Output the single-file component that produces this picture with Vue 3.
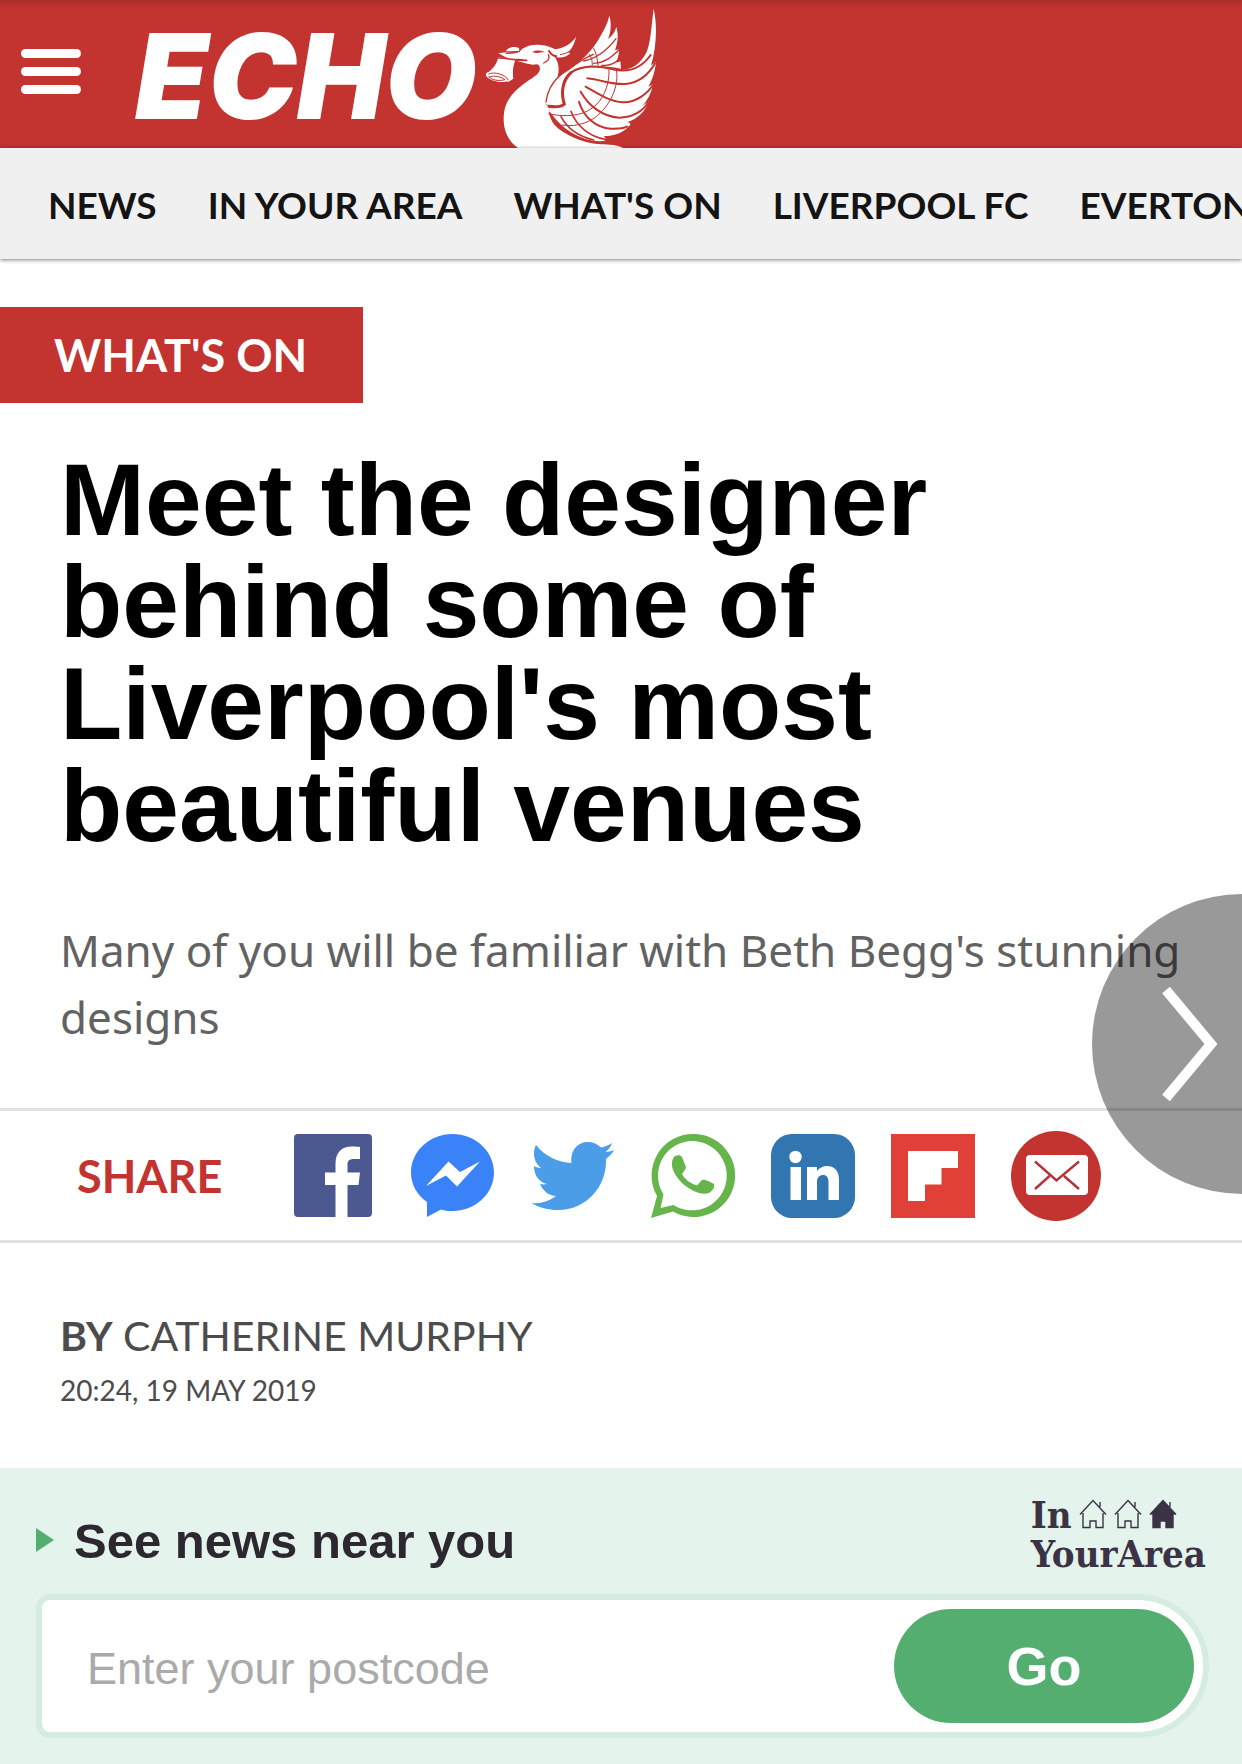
<template>
    <div class="page">
        <header class="header">
            <button class="menu-btn" type="button" aria-label="Menu">
                <span class="menu-bar"></span>
                <span class="menu-bar"></span>
                <span class="menu-bar"></span>
            </button>
            <a class="logo" href="#">
                <span class="logo-text">ECHO</span>
                <svg class="logo-bird" viewBox="48 0 516 444" aria-hidden="true">
                    <!-- neck and body -->
                    <path fill="#fff" d="M147 444C112 420 100 380 105 340C109 302 132 278 160 255C188 233 210 226 213 207C213 199 209 193 202 193C190 196 178 192 170 190L142 182L172 180C160 176 140 176 120 177L88 160C112 156 135 160 152 155C162 140 190 131 215 135C234 136 246 142 258 148C284 145 306 132 321 111C317 130 309 147 296 157L304 160C292 172 272 176 257 170C270 188 272 210 265 232C257 258 236 280 231 312L243 326C238 340 243 356 256 374C285 404 335 427 395 433C420 433 448 436 462 444Z" />
                    <path fill="#fff" d="M110 154C118 142 134 138 150 144L151 153Z" />
                    <!-- bell in the beak -->
                    <path fill="#fff" d="M88 172L140 178C132 196 130 216 133 236L118 246L60 215C74 205 84 190 88 172Z" />
                    <ellipse cx="86" cy="230" rx="36" ry="15" transform="rotate(11 86 230)" fill="#fff" />
                    <g fill="none" stroke="#c3332f" stroke-linecap="round">
                        <path stroke-width="3" d="M59 222C75 214 108 222 118 240M60 231C75 224 100 232 108 239C90 244 70 241 60 231" />
                        <path stroke-width="5" d="M88 174C118 173 140 184 173 181" />
                        <path stroke-width="4" d="M151 154C140 158 126 160 112 160M238 164C244 176 236 184 224 189" />
                        <path stroke-width="6" d="M240 153C246 163 254 168 262 169" />
                        <path stroke-width="3" d="M274 164C285 162 293 159 298 156" />
                    </g>
                    <path fill="#c3332f" d="M190 156C202 150 218 150 230 158C216 154 210 164 190 156Z" />
                    <!-- far wing -->
                    <path fill="#fff" d="M231 310C232 270 252 236 296 210C336 187 372 148 390 116C404 92 416 70 421 47C428 68 426 96 417 117C430 108 438 96 442 81C450 108 445 132 438 151L450 148C451 162 446 172 443 188L454 184L456 206C400 196 340 192 304 216C280 235 272 262 284 300L290 318L243 324Z" />
                    <!-- near wing -->
                    <path fill="#fff" d="M243 324L290 317C274 284 280 242 312 216C344 200 390 198 440 208C478 216 512 196 532 158C546 126 547 76 554 26C565 72 563 142 546 196L561 186C558 215 550 240 538 260L552 252C547 280 536 300 520 318L539 304C530 334 505 358 475 366C490 370 484 376 475 383C455 402 430 408 405 408L414 422C350 434 280 394 241 338Z" />
                    <g fill="none" stroke="#c3332f" stroke-linecap="round">
                        <path stroke-width="9" d="M240 319C260 322 276 322 286 312C276 282 278 244 306 218" />
                        <path stroke-width="6" d="M306 218C336 194 390 196 428 207C478 220 516 206 545 165" />
                        <path stroke-width="4" d="M231 306C236 270 256 232 300 208C324 188 352 172 373 163" />
                        <path stroke-width="4" d="M344 183C385 176 415 150 441 116M374 190C410 188 432 168 452 148M398 196C420 198 440 190 452 174" />
                        <path stroke-width="3" d="M374 145C382 160 385 176 387 196M361 163C368 172 370 184 370 194" />
                        <path stroke-width="6" d="M355 235C400 240 425 254 470 252C510 248 540 222 558 190" />
                        <path stroke-width="6" d="M350 260C385 280 420 304 462 307C502 308 536 280 551 256" />
                        <path stroke-width="6" d="M335 275C360 318 400 350 450 353C492 353 522 332 537 308" />
                        <path stroke-width="6" d="M330 305C344 352 382 384 425 386C448 387 466 384 474 380" />
                        <path stroke-width="5" d="M306 334C322 378 360 410 412 419" />
                        <path stroke-width="5" d="M276 350C296 388 332 410 374 420" />
                        <path stroke-width="7" d="M242 340C276 388 330 426 394 428C404 428 410 425 414 422" />
                        <path stroke-width="3" d="M420 210C422 258 400 304 370 324C334 350 290 350 246 343M443 214C450 270 414 330 370 358C340 374 312 380 280 375" />
                    </g>
                </svg>
            </a>
        </header>

        <nav class="nav">
            <a v-for="item in navItems" :key="item" class="nav-link" href="#">{{ item }}</a>
        </nav>

        <main class="article">
            <a class="tag" href="#">WHAT'S ON</a>
            <h1 class="title">Meet the designer behind some of Liverpool's most beautiful venues</h1>
            <p class="lead">Many of you will be familiar with Beth Begg's stunning designs</p>

            <section class="share">
                <span class="share-label">SHARE</span>
                <div class="share-list">
                    <a class="share-item" href="#" aria-label="Facebook">
                        <svg viewBox="0 0 84 84">
                            <rect x="3" width="78" height="83" rx="4" fill="#4b5990" />
                            <path fill="#fff" d="M44.500 83V51H34V38.500H44.500V30C44.500 18 51 12.500 61 12.500C64 12.500 67 12.700 69 13V25H63C58 25 56.500 27 56.500 31V38.500H69L67.500 51H56.500V83Z" />
                        </svg>
                    </a>
                    <a class="share-item" href="#" aria-label="Messenger">
                        <svg viewBox="0 0 84 84">
                            <path fill="#3a82f7" d="M41.500 0C64 0 83 17 83 38.500C83 60 64 77 41.500 77C37.500 77 33.500 76.500 30 75.500L16 83V68C6 61 0 50.500 0 38.500C0 17 19 0 41.500 0Z" />
                            <path fill="#fff" d="M15 52L37.500 27.500L49 38L69 27.500L46 52.500L35 41.500Z" />
                        </svg>
                    </a>
                    <a class="share-item" href="#" aria-label="Twitter">
                        <svg viewBox="0 0 84 84">
                            <path fill="#4c9de8" d="M5 11C14 22 27 28.500 40.500 29C39 16 47 8 57 8C62 8 66.500 10 70 13.500C74 13 78 11 81 9C80 13 77 16 74.500 18C78 17.700 81 17 83.500 16C81 19.500 78 22.500 75 25C76 53 55 76 27 76C17 76 8 73.500 0 69C10 70 18 67 25 62C18 62 12 57 9 50C12 50.500 14 50.500 16 50C7 48 3 40 3 32C5.500 33.500 8 34 10 34C3 28.500 1 19 5 11Z" />
                        </svg>
                    </a>
                    <a class="share-item" href="#" aria-label="WhatsApp">
                        <svg viewBox="0 0 84 84">
                            <path fill="#65b54a" fill-rule="evenodd" d="M42.500 0A41.500 41.500 0 1 1 22 77.500L0 84L6 62A41.500 41.500 0 0 1 42.500 0ZM42.500 7A34.700 34.700 0 0 0 12.500 60.500L9.500 74L22.500 71A34.700 34.700 0 1 0 42.500 7Z" />
                            <path fill="#65b54a" d="M24 22C27 20.500 30 21 31 23L35 33C35 35.500 32 38 31 40C34 46 41 50 46 51.500L51 46C53 44.500 60 48 63 50C64 54 61 57 58 59C50 62 38 56 30 48C24 41.500 20 34 21 28C21.500 25 22.500 23.500 24 22Z" />
                        </svg>
                    </a>
                    <a class="share-item" href="#" aria-label="LinkedIn">
                        <svg viewBox="0 0 84 84">
                            <rect width="84" height="84" rx="21" fill="#3175b1" />
                            <circle cx="24.500" cy="23" r="6.200" fill="#fff" />
                            <path fill="#fff" d="M19.500 33H30V66H19.500ZM36 33H46V37C48 34 52 32 56 32C64 32 68 37.500 68 46V66H57.500V48C57.500 43.500 55.500 41 52 41C48 41 46 44 46 48V66H36Z" />
                        </svg>
                    </a>
                    <a class="share-item" href="#" aria-label="Flipboard">
                        <svg viewBox="0 0 84 84">
                            <rect width="84" height="84" fill="#e04038" />
                            <path fill="#fff" d="M17 17H67V34H50.500V50.500H34V67H17Z" />
                        </svg>
                    </a>
                    <a class="share-item share-mail" href="#" aria-label="Email">
                        <svg viewBox="0 0 90 90">
                            <circle cx="45" cy="45" r="45" fill="#c3332f" />
                            <rect x="15" y="24" width="62" height="40" rx="4" fill="#fff" />
                            <path fill="none" stroke="#b5323a" stroke-width="2.400" d="M24 30.500L45.500 49.500L68 30.500M24 58L38.500 45M68 58L53 45" />
                        </svg>
                    </a>
                </div>
            </section>

            <div class="meta">
                <p class="byline"><b>BY</b> CATHERINE MURPHY</p>
                <time class="date" datetime="2019-05-19T20:24">20:24, 19 MAY 2019</time>
            </div>

            <button class="next-btn" type="button" aria-label="Next article">
                <svg class="next-icon" viewBox="0 0 60 120">
                    <path fill="none" stroke="#fff" stroke-width="10" d="M5 6L50 60L5 114" />
                </svg>
            </button>
        </main>

        <section class="local">
            <div class="local-head">
                <svg class="arrow" viewBox="0 0 18 24" aria-hidden="true">
                    <path fill="#53ae70" d="M0 0L18 12L0 24Z" />
                </svg>
                <label class="local-title" for="postcode">See news near you</label>
                <a class="area-logo" href="#">
                    <span class="area-row">
                        In
                        <svg v-for="n in 3" :key="n" class="house" :class="{ filled: n === 3 }" viewBox="0 0 28 30">
                            <path d="M4 14V28.500H11V22H17V28.500H24V14" />
                            <path class="roof" d="M1 15.500L14 1.500L27 15.500M21 8V3" />
                        </svg>
                    </span>
                    <span class="area-row">YourArea</span>
                </a>
            </div>
            <form class="postcode-form" @submit.prevent>
                <input id="postcode" v-model="postcode" class="postcode" type="text" placeholder="Enter your postcode" />
                <button class="go-btn" type="submit">Go</button>
            </form>
        </section>
    </div>
</template>

<script setup>
import { ref } from "vue"

const navItems = ["NEWS", "IN YOUR AREA", "WHAT'S ON", "LIVERPOOL FC", "EVERTON"]
const postcode = ref("")
</script>

<style>
body {
    margin: 0;
    background: #fff;
}
</style>

<style scoped>
.page {
    overflow: hidden;
    font-family: Lato, "Noto Sans", sans-serif;
}

a {
    color: inherit;
    text-decoration: none;
}

button {
    border: none;
    cursor: pointer;
}

.header {
    display: flex;
    align-items: center;
    height: 148px;
    padding-left: 21px;
    background: linear-gradient(#a92f2e, #c3332f 8px);
}

.menu-btn {
    display: flex;
    flex-direction: column;
    gap: 9px;
    padding: 0;
    margin: 0 54px 5px 0;
    background: none;
}

.menu-bar {
    width: 60px;
    height: 9px;
    border-radius: 5px;
    background: #fff;
}

.logo {
    display: flex;
    align-items: center;
    color: #fff;
}

.logo-text {
    width: 350px;
    padding-top: 4px;
    font: italic 900 118px/144px Inter, "Open Sans", sans-serif;
}

.logo-bird {
    width: 172px;
    height: 148px;
}

.nav {
    position: relative;
    display: flex;
    gap: 51px;
    padding: 2px 48px 0;
    background: #f0f0f0;
    box-shadow: 0 1px 4px rgba(0,0,0,0.5);
    white-space: nowrap;
}

.nav-link {
    font-size: 37px;
    line-height: 109px;
    font-weight: 700;
    color: #141414;
}

.article {
    position: relative;
    padding-top: 48px;
}

.tag {
    display: inline-block;
    padding: 0 56px 0 54px;
    background: #c3332f;
    color: #fff;
    font-size: 45px;
    line-height: 96px;
    font-weight: 700;
    vertical-align: top;
}

.title {
    max-width: 960px;
    margin: 46px 60px 0;
    font: bold 102px/102px "Liberation Sans", Arial, sans-serif;
    color: #000;
}

.lead {
    margin: 60px 60px 57px;
    font-family: "Noto Sans", sans-serif;
    font-size: 44px;
    line-height: 67px;
    color: #626262;
}

.share {
    display: flex;
    align-items: center;
    height: 129px;
    padding-left: 77px;
    border-top: 3px solid #e0e0e0;
    border-bottom: 3px solid #e0e0e0;
}

.share-label {
    width: 214px;
    font-size: 45px;
    font-weight: 700;
    color: #c3332f;
}

.share-list {
    display: flex;
    align-items: center;
    gap: 36px;
}

.share-item {
    width: 84px;
    height: 84px;
}

.share-mail {
    width: 90px;
    height: 90px;
}

.share-item svg {
    display: block;
    width: 100%;
    height: 100%;
    overflow: visible;
}

.meta {
    padding: 60px 60px 57px;
    color: #4c4c4c;
}

.byline {
    margin: 0;
    font-size: 41px;
    line-height: 66px;
}

.date {
    display: block;
    font-size: 28px;
    line-height: 42px;
}

.next-btn {
    position: absolute;
    top: 635px;
    right: -150px;
    display: flex;
    align-items: center;
    width: 300px;
    height: 300px;
    padding: 0 0 0 69px;
    border-radius: 50%;
    background: rgba(0,0,0,0.4);
}

.next-icon {
    width: 60px;
    height: 120px;
}

.local {
    padding: 30px 33px 27px 36px;
    background: #e4f3eb;
}

.local-head {
    display: flex;
    align-items: center;
    height: 80px;
    margin-bottom: 16px;
}

.arrow {
    width: 18px;
    height: 24px;
    margin-top: 4px;
}

.local-title {
    margin-right: auto;
    padding: 6px 0 0 20px;
    font: bold 49px/56px "Liberation Sans", Arial, sans-serif;
    color: #2d2830;
}

.area-logo {
    display: flex;
    flex-direction: column;
    margin: 0 3px 9px 0;
    color: #3b3345;
    font: bold 38px/39px "DejaVu Serif Condensed", "DejaVu Serif", serif;
}

.area-row {
    display: flex;
    align-items: center;
    gap: 7px;
}

.house {
    width: 28px;
    height: 30px;
    fill: none;
    stroke: #3b3345;
    stroke-width: 1.4;
}

.house.filled {
    fill: #3b3345;
}

.postcode-form {
    display: flex;
    align-items: center;
    padding: 9px;
    border: 6px solid #d5ede1;
    border-radius: 14px 72px 72px 14px;
    background: #fff;
}

.postcode {
    flex: 1;
    min-width: 0;
    height: 114px;
    box-sizing: border-box;
    padding: 6px 36px 0;
    border: none;
    outline: none;
    background: none;
    font: 45px/54px "Liberation Sans", Arial, sans-serif;
    color: #2d2830;
}

.postcode::placeholder {
    color: #aaa;
    opacity: 1;
}

.go-btn {
    width: 300px;
    height: 114px;
    padding: 0;
    border-radius: 57px;
    background: #53ae70;
    color: #fff;
    font: bold 54px/114px "Liberation Sans", Arial, sans-serif;
}
</style>
